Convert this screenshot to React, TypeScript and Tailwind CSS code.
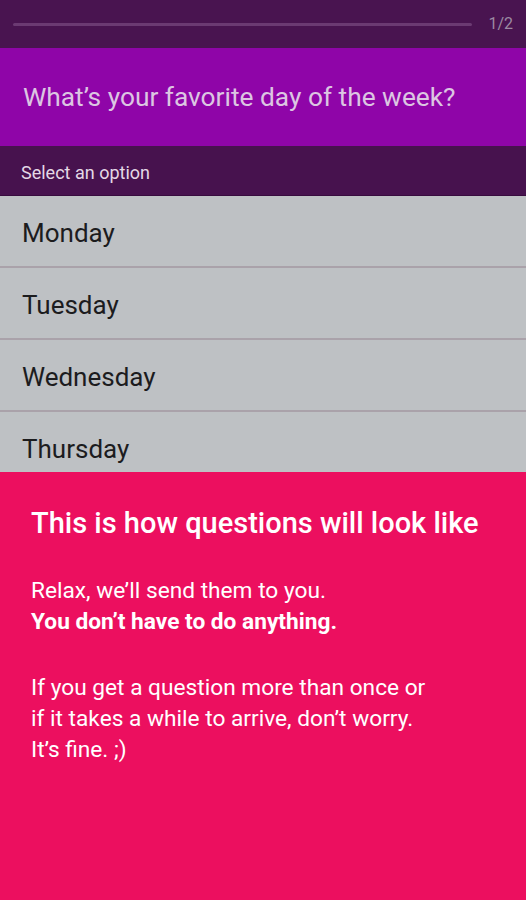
import React from "react";

const days = ["Monday", "Tuesday", "Wednesday", "Thursday"];

export default function App() {
  return (
    <div className="flex h-[900px] w-full flex-col overflow-hidden font-['Roboto',sans-serif]">
      {/* progress */}
      <div className="flex h-12 shrink-0 items-center gap-4 bg-[#491450] pl-[13px] pr-[13px]">
        <div className="h-[3px] flex-1 rounded-full bg-[#6b3a72]" />
        <span className="text-[16px] leading-none text-[#9c8aa2]">1/2</span>
      </div>

      {/* question */}
      <div className="flex h-[98px] shrink-0 items-center bg-[#8f05a8] px-[23px]">
        <h1 className="text-[26.3px] leading-8 text-[#dcc6e2]">
          What’s your favorite day of the week?
        </h1>
      </div>

      <div className="flex h-[50px] shrink-0 items-center border-b border-[#380b3e] bg-[#47124e] px-[21px] pt-[3px]">
        <span className="text-[18px] text-[#e4d8e6]">Select an option</span>
      </div>

      {/* options */}
      <ul className="h-[276px] shrink-0 overflow-hidden bg-[#bec1c4]">
        {days.map((d) => (
          <li
            key={d}
            className="flex h-[72px] items-center border-b-2 border-[#aaa2aa] px-[22px] pt-1 text-[26px] text-[#1c1c1e]"
          >
            {d}
          </li>
        ))}
      </ul>

      {/* info */}
      <div className="flex-1 bg-[#ec0f5f] px-[31px] pt-[35px] text-white">
        <h2 className="text-[29px] font-medium leading-8">This is how questions will look like</h2>
        <div className="mt-9 text-[22.7px] leading-[31px]">
          <p>Relax, we’ll send them to you.</p>
          <p className="font-bold">You don’t have to do anything.</p>
          <p className="mt-[35px]">
            If you get a question more than once or
            <br />
            if it takes a while to arrive, don’t worry.
            <br />
            It’s fine. ;)
          </p>
        </div>
      </div>
    </div>
  );
}
